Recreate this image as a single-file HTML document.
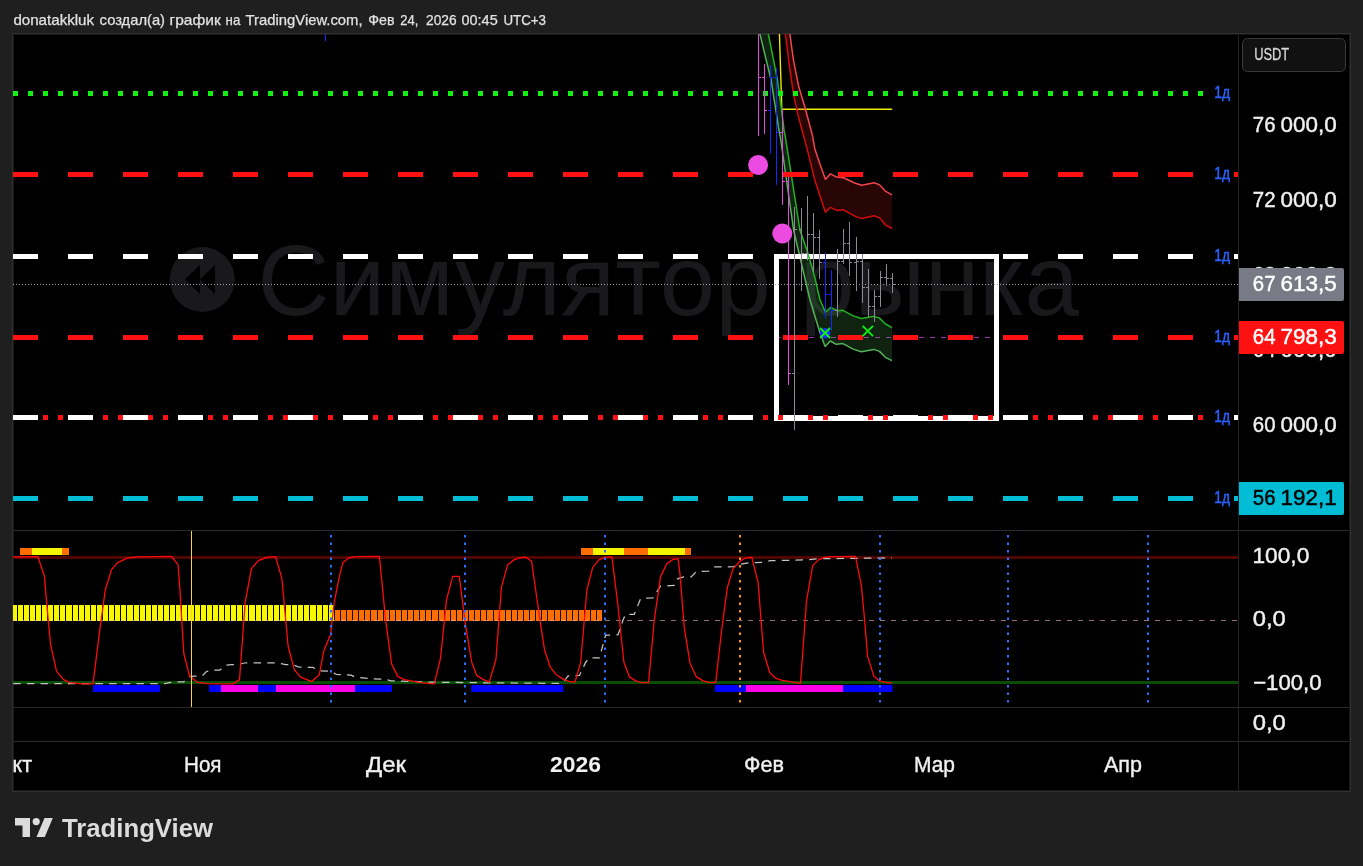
<!DOCTYPE html>
<html lang="ru"><head><meta charset="utf-8"><title>TradingView chart</title>
<style>
html,body{margin:0;padding:0;background:#1f1f1f;overflow:hidden}
svg{display:block;font-family:'Liberation Sans', sans-serif;will-change:transform}
</style></head><body>
<svg width="1363" height="866" viewBox="0 0 1363 866">
<rect x="0" y="0" width="1363" height="866" fill="#1f1f1f"/>
<rect x="12.5" y="33.5" width="1338" height="758" fill="#000" stroke="#303030" stroke-width="1"/>
<rect x="13.5" y="34.5" width="1336" height="756" fill="#000" stroke="#161616" stroke-width="1"/>
<g fill="#19191c">
<circle cx="202.3" cy="279.5" r="32.4"/>
</g>
<path d="M184.8,279.4 L200,264.8 L200,294.1 Z M200,279.4 L214.9,264.8 L214.9,294.1 Z" fill="#000"/>
<text y="315.2" font-size="101" fill="#19191c"><tspan x="257.5" textLength="513.3" lengthAdjust="spacingAndGlyphs">Симулятор</tspan> <tspan x="800" textLength="279" lengthAdjust="spacingAndGlyphs">рынка</tspan></text>
<clipPath id="cm"><rect x="13" y="34" width="1225" height="496"/></clipPath>
<g clip-path="url(#cm)">
<rect x="325" y="34" width="1" height="7" fill="#1428ff"/>
<line x1="776" y1="337.5" x2="994" y2="337.5" stroke="#a82ab8" stroke-width="1.2" stroke-dasharray="5 6"/>
<rect x="776.5" y="256.5" width="220" height="162" fill="none" stroke="#fff" stroke-width="5"/>
<polyline points="779.3,30 781.8,108.6 782,109.2 892.2,109.2" fill="none" stroke="#eaea00" stroke-width="1.4"/>
<polygon points="788.0,20.0 789.9,34.4 793.6,61.2 798.6,86.1 804.9,107.3 812.3,134.8 814.8,148.7 819.8,163.7 825.4,179.3 830.4,173.9 836.7,177.1 843.5,177.8 854.7,183.0 861.6,185.2 874.1,182.8 879.7,184.9 885.3,191.1 891.9,194.9 891.9,228.5 885.3,224.8 879.7,217.9 874.1,215.8 861.6,218.6 854.7,216.1 843.5,209.8 836.7,210.4 830.4,207.3 825.4,212.3 814.8,179.9 808.0,152.4 804.2,138.0 798.6,117.3 793.6,94.9 789.3,64.9 785.5,34.4 783.5,20.0" fill="rgba(255,40,40,0.16)"/>
<polyline points="783.5,20.0 785.5,34.4 789.3,64.9 793.6,94.9 798.6,117.3 804.2,138.0 808.0,152.4 814.8,179.9 825.4,212.3 830.4,207.3 836.7,210.4 843.5,209.8 854.7,216.1 861.6,218.6 874.1,215.8 879.7,217.9 885.3,224.8 891.9,228.5" fill="none" stroke="#d40a0a" stroke-width="1.5" stroke-linejoin="round"/>
<polyline points="788.0,20.0 789.9,34.4 793.6,61.2 798.6,86.1 804.9,107.3 812.3,134.8 814.8,148.7 819.8,163.7 825.4,179.3 830.4,173.9 836.7,177.1 843.5,177.8 854.7,183.0 861.6,185.2 874.1,182.8 879.7,184.9 885.3,191.1 891.9,194.9" fill="none" stroke="#f2444f" stroke-width="1.5" stroke-linejoin="round"/>
<polygon points="764.4,20.0 768.4,34.4 777.5,80.0 783.4,124.0 783.9,130.0 785.5,138.0 799.9,230.0 807.3,251.2 814.8,277.4 820.0,300.0 825.5,312.2 830.7,307.4 837.0,310.7 842.9,310.3 853.2,315.9 861.3,318.5 873.9,316.3 879.5,318.1 885.4,324.0 892.0,327.7 892.0,360.6 885.4,357.3 879.5,351.4 873.9,349.4 861.3,351.7 853.2,349.1 842.9,343.6 836.2,344.3 830.3,341.0 825.1,346.6 819.8,332.3 810.0,300.0 793.6,230.0 780.5,138.0 778.9,130.0 778.0,124.0 771.1,80.0 760.0,34.4 756.0,20.0" fill="rgba(76,175,80,0.2)"/>
<polyline points="756.0,20.0 760.0,34.4 771.1,80.0 778.0,124.0 778.9,130.0 780.5,138.0 793.6,230.0 810.0,300.0 819.8,332.3 825.1,346.6 830.3,341.0 836.2,344.3 842.9,343.6 853.2,349.1 861.3,351.7 873.9,349.4 879.5,351.4 885.4,357.3 892.0,360.6" fill="none" stroke="#52b257" stroke-width="1.5" stroke-linejoin="round"/>
<polyline points="764.4,20.0 768.4,34.4 777.5,80.0 783.4,124.0 783.9,130.0 785.5,138.0 799.9,230.0 807.3,251.2 814.8,277.4 820.0,300.0 825.5,312.2 830.7,307.4 837.0,310.7 842.9,310.3 853.2,315.9 861.3,318.5 873.9,316.3 879.5,318.1 885.4,324.0 892.0,327.7" fill="none" stroke="#20b420" stroke-width="1.5" stroke-linejoin="round"/>
<line x1="13" y1="93.5" x2="1258" y2="93.5" stroke="#12f212" stroke-width="5" stroke-dasharray="5 10"/>
<line x1="13" y1="174.5" x2="1258" y2="174.5" stroke="#ff1111" stroke-width="5" stroke-dasharray="25 30"/>
<line x1="13" y1="256.5" x2="1258" y2="256.5" stroke="#fff" stroke-width="5" stroke-dasharray="25 30"/>
<line x1="13" y1="337.5" x2="1258" y2="337.5" stroke="#ff1111" stroke-width="5" stroke-dasharray="25 30"/>
<line x1="13" y1="417.5" x2="1258" y2="417.5" stroke="#ff1111" stroke-width="5" stroke-dasharray="5 10"/>
<line x1="13" y1="417.5" x2="1258" y2="417.5" stroke="#fff" stroke-width="5" stroke-dasharray="25 30"/>
<line x1="13" y1="498.5" x2="1258" y2="498.5" stroke="#00bcd4" stroke-width="5" stroke-dasharray="25 30"/>
<line x1="13" y1="284.5" x2="1238" y2="284.5" stroke="#a4a4a4" stroke-width="1" stroke-dasharray="1 2"/>
<rect x="758" y="20.0" width="1" height="116.0" fill="#e846e0"/>
<rect x="759" y="77" width="2" height="1" fill="#e846e0"/>
<rect x="764" y="64.0" width="1" height="70.0" fill="#e846e0"/>
<rect x="762" y="77" width="2" height="1" fill="#e846e0"/>
<rect x="765" y="110" width="2" height="1" fill="#e846e0"/>
<rect x="770" y="65.0" width="1" height="88.7" fill="#1428ff"/>
<rect x="768" y="110" width="2" height="1" fill="#1428ff"/>
<rect x="771" y="77" width="2" height="1" fill="#1428ff"/>
<rect x="776" y="68.0" width="1" height="116.9" fill="#1428ff"/>
<rect x="774" y="77" width="2" height="1" fill="#1428ff"/>
<rect x="777" y="132" width="2" height="1" fill="#1428ff"/>
<rect x="782" y="108.8" width="1" height="96.0" fill="#e846e0"/>
<rect x="780" y="132" width="2" height="1" fill="#e846e0"/>
<rect x="783" y="181" width="2" height="1" fill="#e846e0"/>
<rect x="788" y="177.0" width="1" height="207.9" fill="#e846e0"/>
<rect x="786" y="181" width="2" height="1" fill="#e846e0"/>
<rect x="789" y="373" width="2" height="1" fill="#e846e0"/>
<rect x="794" y="207.0" width="1" height="222.8" fill="#8a8a94"/>
<rect x="792" y="373" width="2" height="1" fill="#8a8a94"/>
<rect x="795" y="229" width="2" height="1" fill="#8a8a94"/>
<rect x="801" y="208.0" width="1" height="83.0" fill="#8a8a94"/>
<rect x="799" y="229" width="2" height="1" fill="#8a8a94"/>
<rect x="802" y="253" width="2" height="1" fill="#8a8a94"/>
<rect x="807" y="196.0" width="1" height="64.5" fill="#8a8a94"/>
<rect x="805" y="253" width="2" height="1" fill="#8a8a94"/>
<rect x="808" y="234" width="2" height="1" fill="#8a8a94"/>
<rect x="813" y="213.0" width="1" height="58.8" fill="#8a8a94"/>
<rect x="811" y="234" width="2" height="1" fill="#8a8a94"/>
<rect x="814" y="237" width="2" height="1" fill="#8a8a94"/>
<rect x="819" y="229.8" width="1" height="49.1" fill="#8a8a94"/>
<rect x="817" y="237" width="2" height="1" fill="#8a8a94"/>
<rect x="820" y="262" width="2" height="1" fill="#8a8a94"/>
<rect x="825" y="253.0" width="1" height="65.8" fill="#1428ff"/>
<rect x="823" y="262" width="2" height="1" fill="#1428ff"/>
<rect x="826" y="294" width="2" height="1" fill="#1428ff"/>
<rect x="831" y="270.2" width="1" height="60.6" fill="#1428ff"/>
<rect x="829" y="294" width="2" height="1" fill="#1428ff"/>
<rect x="832" y="310" width="2" height="1" fill="#1428ff"/>
<rect x="837" y="249.0" width="1" height="67.9" fill="#8a8a94"/>
<rect x="835" y="310" width="2" height="1" fill="#8a8a94"/>
<rect x="838" y="261" width="2" height="1" fill="#8a8a94"/>
<rect x="843" y="229.0" width="1" height="34.9" fill="#8a8a94"/>
<rect x="841" y="261" width="2" height="1" fill="#8a8a94"/>
<rect x="844" y="243" width="2" height="1" fill="#8a8a94"/>
<rect x="849" y="222.0" width="1" height="53.8" fill="#8a8a94"/>
<rect x="847" y="243" width="2" height="1" fill="#8a8a94"/>
<rect x="850" y="262" width="2" height="1" fill="#8a8a94"/>
<rect x="856" y="237.0" width="1" height="54.0" fill="#8a8a94"/>
<rect x="854" y="262" width="2" height="1" fill="#8a8a94"/>
<rect x="857" y="261" width="2" height="1" fill="#8a8a94"/>
<rect x="862" y="254.0" width="1" height="49.0" fill="#8a8a94"/>
<rect x="860" y="261" width="2" height="1" fill="#8a8a94"/>
<rect x="863" y="287" width="2" height="1" fill="#8a8a94"/>
<rect x="868" y="268.9" width="1" height="48.1" fill="#8a8a94"/>
<rect x="866" y="287" width="2" height="1" fill="#8a8a94"/>
<rect x="869" y="306" width="2" height="1" fill="#8a8a94"/>
<rect x="874" y="290.0" width="1" height="32.0" fill="#8a8a94"/>
<rect x="872" y="306" width="2" height="1" fill="#8a8a94"/>
<rect x="875" y="296" width="2" height="1" fill="#8a8a94"/>
<rect x="880" y="271.0" width="1" height="36.0" fill="#8a8a94"/>
<rect x="878" y="296" width="2" height="1" fill="#8a8a94"/>
<rect x="881" y="277" width="2" height="1" fill="#8a8a94"/>
<rect x="886" y="264.0" width="1" height="21.8" fill="#8a8a94"/>
<rect x="884" y="277" width="2" height="1" fill="#8a8a94"/>
<rect x="887" y="278" width="2" height="1" fill="#8a8a94"/>
<rect x="892" y="273.0" width="1" height="20.0" fill="#8a8a94"/>
<rect x="890" y="278" width="2" height="1" fill="#8a8a94"/>
<rect x="893" y="284" width="2" height="1" fill="#8a8a94"/>
<circle cx="758.1" cy="165" r="10" fill="#ec4be2"/>
<circle cx="782.3" cy="233.5" r="10" fill="#ec4be2"/>
<circle cx="825.1" cy="333.3" r="5.2" fill="#1a2cff"/>
<path d="M820.1,328 L830.1,338 M830.1,328 L820.1,338" stroke="#10f010" stroke-width="1.9" fill="none"/>
<path d="M862.5999999999999,325.8 L873.0,336.2 M873.0,325.8 L862.5999999999999,336.2" stroke="#10f010" stroke-width="1.9" fill="none"/>
</g>
<rect x="1209" y="84.5" width="25" height="18" fill="#000"/>
<text x="1214.2" y="97.8" font-size="16" fill="#2962ff" stroke="#2962ff" stroke-width="0.45" textLength="15.8" lengthAdjust="spacingAndGlyphs">1д</text>
<rect x="1209" y="165.5" width="25" height="18" fill="#000"/>
<text x="1214.2" y="178.8" font-size="16" fill="#2962ff" stroke="#2962ff" stroke-width="0.45" textLength="15.8" lengthAdjust="spacingAndGlyphs">1д</text>
<rect x="1209" y="247.5" width="25" height="18" fill="#000"/>
<text x="1214.2" y="260.8" font-size="16" fill="#2962ff" stroke="#2962ff" stroke-width="0.45" textLength="15.8" lengthAdjust="spacingAndGlyphs">1д</text>
<rect x="1209" y="328.5" width="25" height="18" fill="#000"/>
<text x="1214.2" y="341.8" font-size="16" fill="#2962ff" stroke="#2962ff" stroke-width="0.45" textLength="15.8" lengthAdjust="spacingAndGlyphs">1д</text>
<rect x="1209" y="408.5" width="25" height="18" fill="#000"/>
<text x="1214.2" y="421.8" font-size="16" fill="#2962ff" stroke="#2962ff" stroke-width="0.45" textLength="15.8" lengthAdjust="spacingAndGlyphs">1д</text>
<rect x="1209" y="489.5" width="25" height="18" fill="#000"/>
<text x="1214.2" y="502.8" font-size="16" fill="#2962ff" stroke="#2962ff" stroke-width="0.45" textLength="15.8" lengthAdjust="spacingAndGlyphs">1д</text>
<clipPath id="ci"><rect x="13" y="531" width="1225" height="176"/></clipPath>
<g clip-path="url(#ci)">
<line x1="13" y1="557.5" x2="1238" y2="557.5" stroke="#520602" stroke-width="3"/>
<line x1="13" y1="682.5" x2="1238" y2="682.5" stroke="#094d02" stroke-width="3"/>
<rect x="13" y="605" width="4" height="16" fill="#f7f700"/>
<rect x="18" y="605" width="5" height="16" fill="#f7f700"/>
<rect x="24" y="605" width="5" height="16" fill="#f7f700"/>
<rect x="30" y="605" width="5" height="16" fill="#f7f700"/>
<rect x="36" y="605" width="5" height="16" fill="#f7f700"/>
<rect x="42" y="605" width="5" height="16" fill="#f7f700"/>
<rect x="48" y="605" width="5" height="16" fill="#f7f700"/>
<rect x="54" y="605" width="5" height="16" fill="#f7f700"/>
<rect x="60" y="605" width="5" height="16" fill="#f7f700"/>
<rect x="66" y="605" width="6" height="16" fill="#f7f700"/>
<rect x="73" y="605" width="5" height="16" fill="#f7f700"/>
<rect x="79" y="605" width="5" height="16" fill="#f7f700"/>
<rect x="85" y="605" width="5" height="16" fill="#f7f700"/>
<rect x="91" y="605" width="5" height="16" fill="#f7f700"/>
<rect x="97" y="605" width="5" height="16" fill="#f7f700"/>
<rect x="103" y="605" width="5" height="16" fill="#f7f700"/>
<rect x="109" y="605" width="5" height="16" fill="#f7f700"/>
<rect x="115" y="605" width="5" height="16" fill="#f7f700"/>
<rect x="121" y="605" width="5" height="16" fill="#f7f700"/>
<rect x="127" y="605" width="6" height="16" fill="#f7f700"/>
<rect x="134" y="605" width="5" height="16" fill="#f7f700"/>
<rect x="140" y="605" width="5" height="16" fill="#f7f700"/>
<rect x="146" y="605" width="5" height="16" fill="#f7f700"/>
<rect x="152" y="605" width="5" height="16" fill="#f7f700"/>
<rect x="158" y="605" width="5" height="16" fill="#f7f700"/>
<rect x="164" y="605" width="5" height="16" fill="#f7f700"/>
<rect x="170" y="605" width="5" height="16" fill="#f7f700"/>
<rect x="176" y="605" width="5" height="16" fill="#f7f700"/>
<rect x="182" y="605" width="5" height="16" fill="#f7f700"/>
<rect x="188" y="605" width="6" height="16" fill="#f7f700"/>
<rect x="195" y="605" width="5" height="16" fill="#f7f700"/>
<rect x="201" y="605" width="5" height="16" fill="#f7f700"/>
<rect x="207" y="605" width="5" height="16" fill="#f7f700"/>
<rect x="213" y="605" width="5" height="16" fill="#f7f700"/>
<rect x="219" y="605" width="5" height="16" fill="#f7f700"/>
<rect x="225" y="605" width="5" height="16" fill="#f7f700"/>
<rect x="231" y="605" width="5" height="16" fill="#f7f700"/>
<rect x="237" y="605" width="5" height="16" fill="#f7f700"/>
<rect x="243" y="605" width="5" height="16" fill="#f7f700"/>
<rect x="249" y="605" width="6" height="16" fill="#f7f700"/>
<rect x="256" y="605" width="5" height="16" fill="#f7f700"/>
<rect x="262" y="605" width="5" height="16" fill="#f7f700"/>
<rect x="268" y="605" width="5" height="16" fill="#f7f700"/>
<rect x="274" y="605" width="5" height="16" fill="#f7f700"/>
<rect x="280" y="605" width="5" height="16" fill="#f7f700"/>
<rect x="286" y="605" width="5" height="16" fill="#f7f700"/>
<rect x="292" y="605" width="5" height="16" fill="#f7f700"/>
<rect x="298" y="605" width="5" height="16" fill="#f7f700"/>
<rect x="304" y="605" width="5" height="16" fill="#f7f700"/>
<rect x="310" y="605" width="6" height="16" fill="#f7f700"/>
<rect x="317" y="605" width="5" height="16" fill="#f7f700"/>
<rect x="323" y="605" width="5" height="16" fill="#f7f700"/>
<rect x="329" y="605" width="5" height="16" fill="#f7f700"/>
<rect x="335" y="610" width="5" height="11" fill="#ff6d00"/>
<rect x="341" y="610" width="5" height="11" fill="#ff6d00"/>
<rect x="347" y="610" width="5" height="11" fill="#ff6d00"/>
<rect x="353" y="610" width="5" height="11" fill="#ff6d00"/>
<rect x="359" y="610" width="5" height="11" fill="#ff6d00"/>
<rect x="365" y="610" width="5" height="11" fill="#ff6d00"/>
<rect x="371" y="610" width="6" height="11" fill="#ff6d00"/>
<rect x="378" y="610" width="5" height="11" fill="#ff6d00"/>
<rect x="384" y="610" width="5" height="11" fill="#ff6d00"/>
<rect x="390" y="610" width="5" height="11" fill="#ff6d00"/>
<rect x="396" y="610" width="5" height="11" fill="#ff6d00"/>
<rect x="402" y="610" width="5" height="11" fill="#ff6d00"/>
<rect x="408" y="610" width="5" height="11" fill="#ff6d00"/>
<rect x="414" y="610" width="5" height="11" fill="#ff6d00"/>
<rect x="420" y="610" width="5" height="11" fill="#ff6d00"/>
<rect x="426" y="610" width="5" height="11" fill="#ff6d00"/>
<rect x="432" y="610" width="6" height="11" fill="#ff6d00"/>
<rect x="439" y="610" width="5" height="11" fill="#ff6d00"/>
<rect x="445" y="610" width="5" height="11" fill="#ff6d00"/>
<rect x="451" y="610" width="5" height="11" fill="#ff6d00"/>
<rect x="457" y="610" width="5" height="11" fill="#ff6d00"/>
<rect x="463" y="610" width="5" height="11" fill="#ff6d00"/>
<rect x="469" y="610" width="5" height="11" fill="#ff6d00"/>
<rect x="475" y="610" width="5" height="11" fill="#ff6d00"/>
<rect x="481" y="610" width="5" height="11" fill="#ff6d00"/>
<rect x="487" y="610" width="6" height="11" fill="#ff6d00"/>
<rect x="494" y="610" width="5" height="11" fill="#ff6d00"/>
<rect x="500" y="610" width="5" height="11" fill="#ff6d00"/>
<rect x="506" y="610" width="5" height="11" fill="#ff6d00"/>
<rect x="512" y="610" width="5" height="11" fill="#ff6d00"/>
<rect x="518" y="610" width="5" height="11" fill="#ff6d00"/>
<rect x="524" y="610" width="5" height="11" fill="#ff6d00"/>
<rect x="530" y="610" width="5" height="11" fill="#ff6d00"/>
<rect x="536" y="610" width="5" height="11" fill="#ff6d00"/>
<rect x="542" y="610" width="5" height="11" fill="#ff6d00"/>
<rect x="548" y="610" width="6" height="11" fill="#ff6d00"/>
<rect x="555" y="610" width="5" height="11" fill="#ff6d00"/>
<rect x="561" y="610" width="5" height="11" fill="#ff6d00"/>
<rect x="567" y="610" width="5" height="11" fill="#ff6d00"/>
<rect x="573" y="610" width="5" height="11" fill="#ff6d00"/>
<rect x="579" y="610" width="5" height="11" fill="#ff6d00"/>
<rect x="585" y="610" width="5" height="11" fill="#ff6d00"/>
<rect x="591" y="610" width="5" height="11" fill="#ff6d00"/>
<rect x="597" y="610" width="5" height="11" fill="#ff6d00"/>
<line x1="13" y1="620.5" x2="1238" y2="620.5" stroke="rgba(255,195,195,0.58)" stroke-width="1" stroke-dasharray="5 6" stroke-dashoffset="2"/>
<rect x="20" y="548" width="12.0" height="7" fill="#ff6d00"/>
<rect x="32" y="548" width="30.0" height="7" fill="#f5f500"/>
<rect x="62" y="548" width="7.0" height="7" fill="#ff6d00"/>
<rect x="581" y="548" width="12.0" height="7" fill="#ff6d00"/>
<rect x="593" y="548" width="31.0" height="7" fill="#f5f500"/>
<rect x="624" y="548" width="24.0" height="7" fill="#ff6d00"/>
<rect x="648" y="548" width="37.0" height="7" fill="#f5f500"/>
<rect x="685" y="548" width="6.0" height="7" fill="#ff6d00"/>
<rect x="93" y="685" width="67.0" height="7" fill="#0000ff"/>
<rect x="209" y="685" width="12.0" height="7" fill="#0000ff"/>
<rect x="221" y="685" width="37.0" height="7" fill="#ff00e6"/>
<rect x="258" y="685" width="18.0" height="7" fill="#0000ff"/>
<rect x="276" y="685" width="79.0" height="7" fill="#ff00e6"/>
<rect x="355" y="685" width="37.0" height="7" fill="#0000ff"/>
<rect x="471.2" y="685" width="92.0" height="7" fill="#0000ff"/>
<rect x="715" y="685" width="31.0" height="7" fill="#0000ff"/>
<rect x="746" y="685" width="97.0" height="7" fill="#ff00e6"/>
<rect x="843" y="685" width="49.5" height="7" fill="#0000ff"/>
<polyline points="13.2,683.6 164.7,683.6 169.1,682.6 175.7,681.8 183.7,681.8 188.9,676.7 194.0,676.2 202.1,676.0 206.5,671.5 212.4,670.1 219.7,670.1 226.3,665.2 231.4,664.7 238.8,664.7 243.9,663.0 251.2,662.9 276.2,662.9 279.9,663.5 285.7,664.7 293.1,664.7 298.2,666.9 305.5,667.3 312.9,667.4 318.7,670.8 330.5,671.1 336.4,674.5 345.2,674.8 351.2,675.2 355.0,677.1 372.4,678.9 384.9,679.1 391.1,680.9 414.8,681.4 424.8,682.1 464.7,682.6 562.0,683.4 568.2,675.9 579.5,675.4 585.7,662.2 589.4,657.9 599.4,657.9 605.6,635.2 618.1,634.7 623.1,619.8 625.6,614.3 634.3,614.3 640.6,598.6 653.0,597.8 660.5,586.1 674.3,585.4 678.0,578.6 683.7,576.9 691.2,576.9 696.2,571.6 708.7,571.1 714.9,566.9 733.6,566.7 739.9,564.4 748.6,562.9 764.8,562.4 769.8,560.7 804.7,559.9 819.7,558.7 892.0,557.9" fill="none" stroke="#c4c4c4" stroke-width="1.25" stroke-dasharray="7.5 6.2"/>
<polyline points="13.2,556.9 37.9,556.7 44.4,576.1 46.6,602.3 50.6,644.7 56.6,671.4 63.6,679.6 69.8,682.6 82.3,683.9 93.0,683.9 99.8,629.8 105.3,589.8 111.5,569.9 117.2,562.9 127.2,558.2 137.2,556.9 171.6,556.4 178.1,564.9 180.1,592.3 183.8,653.5 189.6,675.9 197.0,682.1 207.0,683.6 233.2,683.9 239.5,679.6 245.2,602.3 251.4,568.6 258.2,560.7 266.9,557.4 275.6,556.7 281.9,578.6 288.1,646.0 294.3,669.7 300.6,677.1 311.8,681.6 319.3,674.7 323.8,651.0 330.5,634.7 334.2,602.3 340.0,573.6 343.0,562.4 348.7,557.9 356.2,556.7 379.4,556.4 385.6,619.8 391.6,663.9 397.9,676.6 404.4,679.6 422.3,682.9 434.3,683.9 440.5,658.4 446.5,599.8 452.7,576.4 459.2,576.4 465.5,624.8 471.7,662.2 476.7,675.4 483.4,679.6 489.2,682.1 495.9,659.7 501.4,587.3 507.6,564.9 513.9,559.9 519.6,557.9 525.8,557.2 531.6,561.2 538.3,608.5 544.5,649.7 550.3,667.2 556.3,674.7 562.7,678.9 568.7,681.4 575.0,682.1 580.7,662.2 586.9,589.8 592.7,567.4 598.9,559.9 604.9,557.4 611.9,556.9 617.6,602.3 623.9,662.2 629.3,676.6 635.6,680.9 641.8,682.6 648.6,682.6 654.3,619.8 660.5,576.9 666.8,563.7 673.0,559.4 678.0,558.7 680.0,574.0 684.2,627.3 690.0,662.9 696.2,676.6 703.0,680.9 709.4,682.4 715.7,682.6 721.7,629.8 727.4,587.3 733.1,568.6 739.9,561.2 745.4,558.2 751.8,557.4 758.1,582.4 763.6,652.2 769.8,672.7 776.0,678.4 782.3,680.4 788.5,681.4 800.5,683.4 806.5,601.1 812.7,565.6 818.4,559.9 824.7,557.4 830.9,556.7 855.4,556.4 861.3,584.9 864.6,619.8 867.6,656.4 873.8,675.9 879.6,680.9 885.8,682.4 892.0,682.9" fill="none" stroke="#ff0a0a" stroke-width="1.3" stroke-linejoin="round"/>
<line x1="331" y1="535" x2="331" y2="703" stroke="#2a70ff" stroke-width="2" stroke-dasharray="2.6 4.9"/>
<line x1="465" y1="535" x2="465" y2="703" stroke="#2a70ff" stroke-width="2" stroke-dasharray="2.6 4.9"/>
<line x1="605" y1="535" x2="605" y2="703" stroke="#2a70ff" stroke-width="2" stroke-dasharray="2.6 4.9"/>
<line x1="880" y1="535" x2="880" y2="703" stroke="#2a70ff" stroke-width="2" stroke-dasharray="2.6 4.9"/>
<line x1="1008" y1="535" x2="1008" y2="703" stroke="#2a70ff" stroke-width="2" stroke-dasharray="2.6 4.9"/>
<line x1="1148" y1="535" x2="1148" y2="703" stroke="#2a70ff" stroke-width="2" stroke-dasharray="2.6 4.9"/>
<line x1="740" y1="535" x2="740" y2="703" stroke="#ff9800" stroke-width="2" stroke-dasharray="2.6 4.9"/>
<rect x="191" y="531" width="1" height="176" fill="#f8d038"/>
</g>
<rect x="1238" y="35" width="1" height="755" fill="#212323"/>
<rect x="14" y="530" width="1335" height="1" fill="#2a2a2a"/>
<rect x="14" y="707" width="1335" height="1" fill="#2a2a2a"/>
<rect x="14" y="741" width="1335" height="1" fill="#2a2a2a"/>
<text y="132.3" font-size="22" fill="#f0f0f0" stroke="#f0f0f0" stroke-width="0.45"><tspan x="1252.8" textLength="22.7" lengthAdjust="spacingAndGlyphs">76</tspan> <tspan x="1280.6" textLength="56.2" lengthAdjust="spacingAndGlyphs">000,0</tspan></text>
<text y="207.3" font-size="22" fill="#f0f0f0" stroke="#f0f0f0" stroke-width="0.45"><tspan x="1252.8" textLength="22.7" lengthAdjust="spacingAndGlyphs">72</tspan> <tspan x="1280.6" textLength="56.2" lengthAdjust="spacingAndGlyphs">000,0</tspan></text>
<text y="282.3" font-size="22" fill="#f0f0f0" stroke="#f0f0f0" stroke-width="0.45"><tspan x="1252.8" textLength="22.7" lengthAdjust="spacingAndGlyphs">68</tspan> <tspan x="1280.6" textLength="56.2" lengthAdjust="spacingAndGlyphs">000,0</tspan></text>
<text y="357.4" font-size="22" fill="#f0f0f0" stroke="#f0f0f0" stroke-width="0.45"><tspan x="1252.8" textLength="22.7" lengthAdjust="spacingAndGlyphs">64</tspan> <tspan x="1280.6" textLength="56.2" lengthAdjust="spacingAndGlyphs">000,0</tspan></text>
<text y="432.4" font-size="22" fill="#f0f0f0" stroke="#f0f0f0" stroke-width="0.45"><tspan x="1252.8" textLength="22.7" lengthAdjust="spacingAndGlyphs">60</tspan> <tspan x="1280.6" textLength="56.2" lengthAdjust="spacingAndGlyphs">000,0</tspan></text>
<text y="507.4" font-size="22" fill="#f0f0f0" stroke="#f0f0f0" stroke-width="0.45"><tspan x="1252.8" textLength="22.7" lengthAdjust="spacingAndGlyphs">56</tspan> <tspan x="1280.6" textLength="56.2" lengthAdjust="spacingAndGlyphs">000,0</tspan></text>
<rect x="1234" y="172.0" width="4" height="5" fill="#ff1111"/>
<rect x="1234" y="254.0" width="4" height="5" fill="#fff"/>
<rect x="1234" y="335.0" width="4" height="5" fill="#ff1111"/>
<rect x="1234" y="415.0" width="4" height="5" fill="#fff"/>
<rect x="1234" y="496.0" width="4" height="5" fill="#00bcd4"/>
<path d="M1239,268 H1342 Q1344,268 1344,270 V299 Q1344,301 1342,301 H1239 Z" fill="#787b86"/>
<text y="290.7" font-size="22" fill="#fff" stroke="#fff" stroke-width="0.45"><tspan x="1252.8" textLength="22.7" lengthAdjust="spacingAndGlyphs">67</tspan> <tspan x="1280.6" textLength="56.2" lengthAdjust="spacingAndGlyphs">613,5</tspan></text>
<path d="M1239,321 H1342 Q1344,321 1344,323 V352 Q1344,354 1342,354 H1239 Z" fill="#ff1111"/>
<text y="343.7" font-size="22" fill="#fff" stroke="#fff" stroke-width="0.45"><tspan x="1252.8" textLength="22.7" lengthAdjust="spacingAndGlyphs">64</tspan> <tspan x="1280.6" textLength="56.2" lengthAdjust="spacingAndGlyphs">798,3</tspan></text>
<path d="M1239,482 H1342 Q1344,482 1344,484 V513 Q1344,515 1342,515 H1239 Z" fill="#00bcd4"/>
<text y="504.7" font-size="22" fill="#000" stroke="#000" stroke-width="0.45"><tspan x="1252.8" textLength="22.7" lengthAdjust="spacingAndGlyphs">56</tspan> <tspan x="1280.6" textLength="56.2" lengthAdjust="spacingAndGlyphs">192,1</tspan></text>
<rect x="1242.5" y="38.5" width="103" height="33" rx="5" fill="#111" stroke="#3a3a3a"/>
<text x="1254.2" y="60" font-size="16" fill="#d8d8d8" stroke="#d8d8d8" stroke-width="0.3" textLength="35" lengthAdjust="spacingAndGlyphs">USDT</text>
<text x="1252.5" y="562.9" font-size="22" fill="#f0f0f0" stroke="#f0f0f0" stroke-width="0.45" textLength="56.8" lengthAdjust="spacingAndGlyphs">100,0</text>
<text x="1252.8" y="625.5" font-size="22" fill="#f0f0f0" stroke="#f0f0f0" stroke-width="0.45" textLength="33" lengthAdjust="spacingAndGlyphs">0,0</text>
<text x="1253.2" y="689.6" font-size="22" fill="#f0f0f0" stroke="#f0f0f0" stroke-width="0.45" textLength="68.3" lengthAdjust="spacingAndGlyphs">−100,0</text>
<text x="1252.8" y="730" font-size="22" fill="#f0f0f0" stroke="#f0f0f0" stroke-width="0.45" textLength="33" lengthAdjust="spacingAndGlyphs">0,0</text>
<clipPath id="ct"><rect x="13" y="742" width="1225" height="48"/></clipPath>
<g clip-path="url(#ct)">
<text x="-4" y="772.3" font-size="22" fill="#f0f0f0" stroke="#f0f0f0" stroke-width="0.4" textLength="36" lengthAdjust="spacingAndGlyphs">Окт</text>
<text x="184" y="772.3" font-size="22" fill="#f0f0f0" stroke="#f0f0f0" stroke-width="0.4" textLength="37.5" lengthAdjust="spacingAndGlyphs">Ноя</text>
<text x="366" y="772.3" font-size="22" fill="#f0f0f0" stroke="#f0f0f0" stroke-width="0.4" textLength="40" lengthAdjust="spacingAndGlyphs">Дек</text>
<text x="550" y="772.3" font-size="22" fill="#f0f0f0" stroke="#f0f0f0" stroke-width="0" font-weight="bold" textLength="51" lengthAdjust="spacingAndGlyphs">2026</text>
<text x="744" y="772.3" font-size="22" fill="#f0f0f0" stroke="#f0f0f0" stroke-width="0.4" textLength="40" lengthAdjust="spacingAndGlyphs">Фев</text>
<text x="914" y="772.3" font-size="22" fill="#f0f0f0" stroke="#f0f0f0" stroke-width="0.4" textLength="41" lengthAdjust="spacingAndGlyphs">Мар</text>
<text x="1104" y="772.3" font-size="22" fill="#f0f0f0" stroke="#f0f0f0" stroke-width="0.4" textLength="38" lengthAdjust="spacingAndGlyphs">Апр</text>
</g>
<text y="25" font-size="15" fill="#e2e2e2" stroke="#e2e2e2" stroke-width="0.25"><tspan x="13.4" textLength="80.7" lengthAdjust="spacingAndGlyphs">donatakkluk</tspan> <tspan x="99.6" textLength="65.4" lengthAdjust="spacingAndGlyphs">создал(а)</tspan> <tspan x="169.5" textLength="51.3" lengthAdjust="spacingAndGlyphs">график</tspan> <tspan x="225.6" textLength="14.7" lengthAdjust="spacingAndGlyphs">на</tspan> <tspan x="245.5" textLength="117.1" lengthAdjust="spacingAndGlyphs">TradingView.com,</tspan> <tspan x="368.3" textLength="26.2" lengthAdjust="spacingAndGlyphs">Фев</tspan> <tspan x="400.2" textLength="18.1" lengthAdjust="spacingAndGlyphs">24,</tspan> <tspan x="426" textLength="30.6" lengthAdjust="spacingAndGlyphs">2026</tspan> <tspan x="461.5" textLength="36.2" lengthAdjust="spacingAndGlyphs">00:45</tspan> <tspan x="503.4" textLength="42.6" lengthAdjust="spacingAndGlyphs">UTC+3</tspan></text>
<path d="M15,818 H30 V837 H22.5 V825.5 H15 Z" fill="#dcdcdc"/>
<circle cx="36.2" cy="821.6" r="3.6" fill="#dcdcdc"/>
<path d="M44.5,818 H52.8 L44.8,837 H36.5 Z" fill="#dcdcdc"/>
<text x="62" y="837" font-size="26" font-weight="bold" fill="#dcdcdc" textLength="151" lengthAdjust="spacingAndGlyphs">TradingView</text>
</svg>
</body></html>
